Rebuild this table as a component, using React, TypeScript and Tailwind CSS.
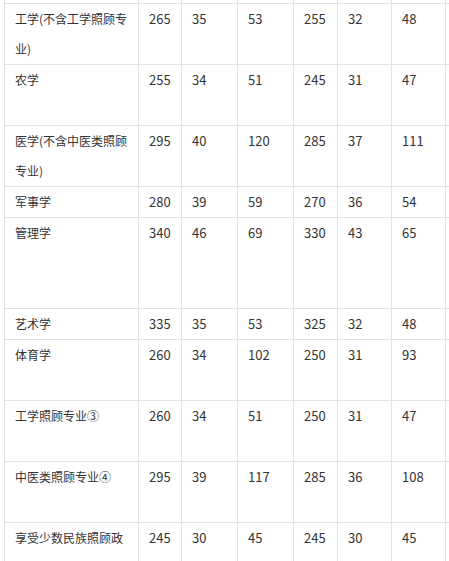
const rows = [
  { name: "工学(不含工学照顾专业)", v: ["265", "35", "53", "255", "32", "48"], h: "h-[61px]" },
  { name: "农学", v: ["255", "34", "51", "245", "31", "47"], h: "h-[61px]" },
  { name: "医学(不含中医类照顾专业)", v: ["295", "40", "120", "285", "37", "111"], h: "h-[61px]" },
  { name: "军事学", v: ["280", "39", "59", "270", "36", "54"], h: "h-[31px]" },
  { name: "管理学", v: ["340", "46", "69", "330", "43", "65"], h: "h-[91px]" },
  { name: "艺术学", v: ["335", "35", "53", "325", "32", "48"], h: "h-[31px]" },
  { name: "体育学", v: ["260", "34", "102", "250", "31", "93"], h: "h-[61px]" },
  { name: "工学照顾专业③", v: ["260", "34", "51", "250", "31", "47"], h: "h-[61px]" },
  { name: "中医类照顾专业④", v: ["295", "39", "117", "285", "36", "108"], h: "h-[61px]" },
  { name: "享受少数民族照顾政策的考生", v: ["245", "30", "45", "245", "30", "45"], h: "h-[91px]" },
];

const cols = "grid grid-cols-[134px_43px_56px_56px_44px_54px_54px_80px]";
const cell = "border-l border-t border-[#e2e2e2] pl-[10px] pr-[9px]";

export default function App() {
  return (
    <div className="h-[561px] w-[449px] overflow-hidden bg-white">
      <div className="pl-[4px] text-[12px] leading-[30px] text-[#333] font-['Noto_Sans_CJK_SC','Microsoft_YaHei',sans-serif]">
        {/* tail of the row above, scrolled off */}
        <div className={`${cols} h-[3px]`}>
          {Array.from({ length: 8 }).map((_, i) => (
            <div key={i} className="border-l border-[#e2e2e2]" />
          ))}
        </div>

        {rows.map((r) => (
          <div key={r.name} className={`${cols} ${r.h}`}>
            <div className={cell}>{r.name}</div>
            {r.v.map((n, i) => (
              <div key={i} className={`${cell} text-[13px]`}>
                {n}
              </div>
            ))}
            <div className={cell} />
          </div>
        ))}
      </div>
    </div>
  );
}
